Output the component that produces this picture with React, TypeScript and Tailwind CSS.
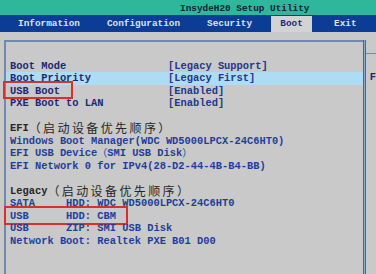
import React from 'react';

const mono = "font-['Liberation_Mono',monospace]";
const cjk =
  "inline-block align-top h-[12.5px] leading-[12.5px] font-['Noto_Sans_CJK_SC',sans-serif] font-normal text-[12px] tracking-[2.4px]";
const cjkParen =
  "inline-block align-top h-[12.5px] leading-[12.5px] font-['Noto_Sans_CJK_SC',sans-serif] font-normal text-[10px]";

const settings = [
  { label: 'Boot Mode', value: '[Legacy Support]' },
  { label: 'Boot Priority', value: '[Legacy First]', active: true },
  { label: 'USB Boot', value: '[Enabled]', boxed: true },
  { label: 'PXE Boot to LAN', value: '[Enabled]' },
];

const legacyItems = [
  { text: 'SATA     HDD: WDC WD5000LPCX-24C6HT0' },
  { text: 'USB      HDD: CBM', boxed: true },
  { text: 'USB      ZIP: SMI USB Disk' },
  { text: 'Network Boot: Realtek PXE B01 D00' },
];

const Heading = ({ prefix }: { prefix: string }) => (
  <div className="h-[12.5px] pl-[4px] text-[#262626] whitespace-pre">
    {prefix}
    <span className={cjk}>（启动设备优先顺序）</span>
  </div>
);

const Item = ({ children }: { children: React.ReactNode }) => (
  <div className="h-[12.5px] pl-[4px] text-[#1f3e9c] whitespace-pre">{children}</div>
);

export default function App() {
  return (
    <div className={`w-[376px] h-[274px] overflow-hidden bg-[#c9c9c9] flex flex-col font-bold ${mono}`}>
      <div className="h-[15px] shrink-0 bg-[#2fb79b] pl-[180px] text-[9.4px] leading-[17px] text-[#0c2234]">
        InsydeH20 Setup Utility
      </div>
      <div className="h-[17px] shrink-0 bg-[#0b3c96] flex items-stretch text-[9.4px] text-[#dde4ef]">
        <span className="ml-[18px] leading-[17px]">Information</span>
        <span className="ml-[27px] leading-[17px]">Configuration</span>
        <span className="ml-[27px] leading-[17px]">Security</span>
        <span className="ml-[19px] mt-[1px] w-[41px] bg-[#d3d3d3] text-center text-[#1c2c6c] leading-[16px]">Boot</span>
        <span className="ml-[22px] leading-[17px]">Exit</span>
      </div>
      <div className="flex-1 flex pt-[8px]">
        <div className="ml-[4px] w-[359px] border-l-2 border-t-2 border-[#7088b4] pt-[17.5px] text-[10.4px] leading-[12.5px]">
          {settings.map((s) => (
            <div
              key={s.label}
              className={`relative h-[12.5px] flex pl-[4px] ${s.active ? 'bg-[#aedcf4]' : ''}`}
            >
              <span className="w-[158px] text-[#1b2a72]">{s.label}</span>
              <span className="text-[#23378c]">{s.value}</span>
              {s.boxed && (
                <div className="absolute left-[-3px] top-[-3.5px] w-[70px] h-[18px] border-2 border-[#d8312b]" />
              )}
            </div>
          ))}
          <div className="h-[12.5px]" />
          <Heading prefix="EFI" />
          <Item>Windows Boot Manager(WDC WD5000LPCX-24C6HT0)</Item>
          <Item>
            EFI USB Device<span className={cjkParen}>（</span>SMI USB Disk<span className={cjkParen}>）</span>
          </Item>
          <Item>EFI Network 0 for IPv4(28-D2-44-4B-B4-BB)</Item>
          <div className="h-[12.5px]" />
          <Heading prefix="Legacy" />
          {legacyItems.map((r) => (
            <div key={r.text} className="relative h-[12.5px] pl-[4px] text-[#1f3e9c] whitespace-pre">
              {r.text}
              {r.boxed && (
                <div className="absolute left-[-2px] top-[-3.5px] w-[124px] h-[19px] border-2 border-[#d8312b]" />
              )}
            </div>
          ))}
        </div>
        <div className="w-[3px] bg-[#8eaad6] border-x border-[#3e67ad]" />
        <div className="flex-1 flex flex-col">
          <div className="h-[14px] border-b border-[#7088b4]" />
          <div className="pt-[17px] pl-[4px] text-[10.4px] leading-[12.5px] text-[#1b2a72]">F</div>
        </div>
      </div>
    </div>
  );
}
